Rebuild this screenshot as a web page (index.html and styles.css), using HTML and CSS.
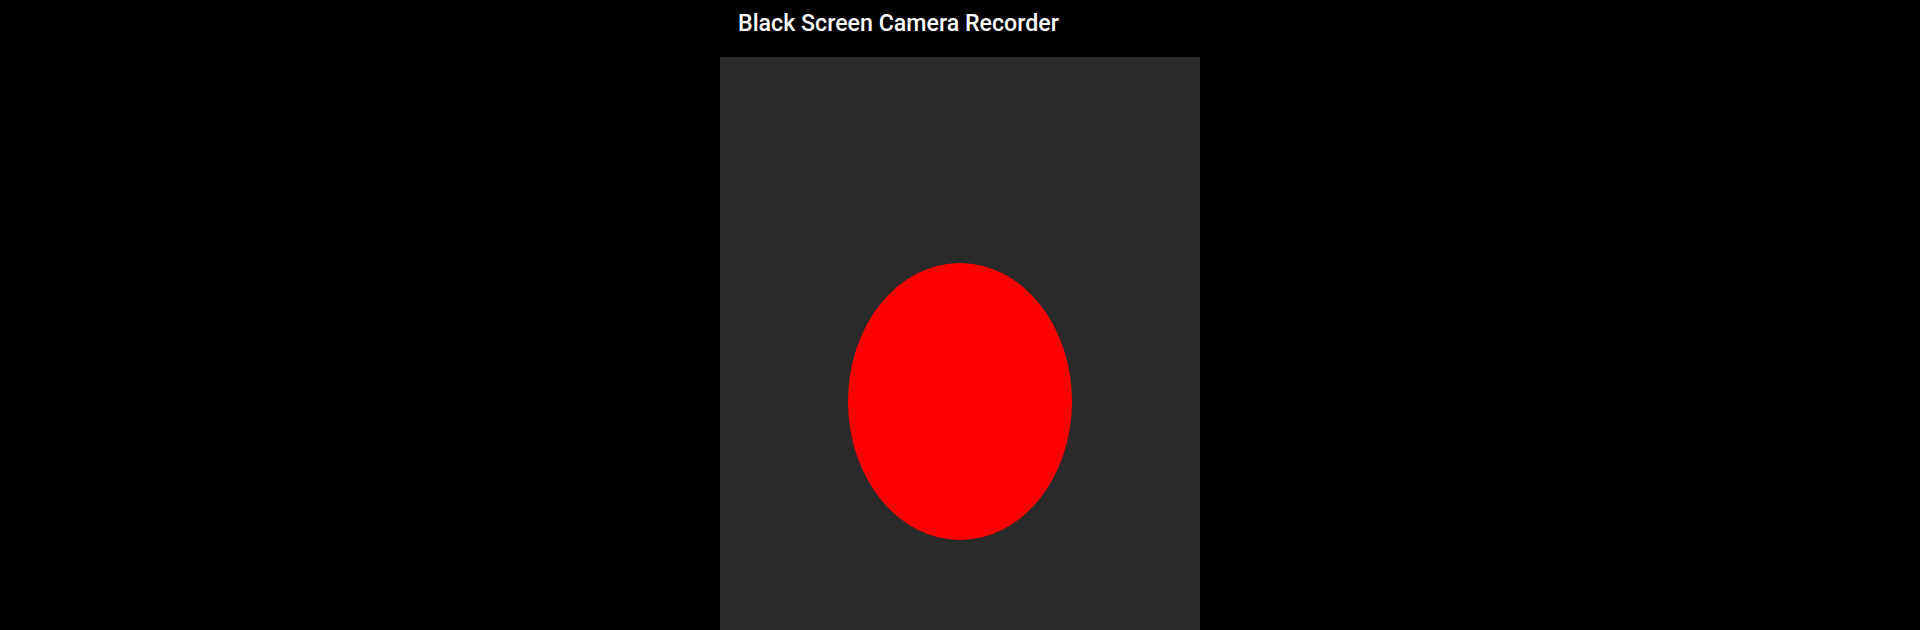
FILE: index.html
```html
<!DOCTYPE html>
<html>
<head>
<meta charset="utf-8">
<link rel="stylesheet" href="styles.css">
</head>
<body>
<div class="app">
  <header class="toolbar"><h1 class="title">Black Screen Camera Recorder</h1></header>
  <main class="panel">
    <div class="record"></div>
  </main>
</div>
</body>
</html>
```
FILE: styles.css
```css
html, body {
  margin: 0;
  padding: 0;
  background: #000;
  height: 100%;
  overflow: hidden;
}
.app {
  width: 480px;
  height: 100vh;
  margin: 0 auto;
  display: flex;
  flex-direction: column;
}
.toolbar {
  height: 57px;
  flex: none;
  padding-left: 18px;
  display: flex;
  align-items: flex-start;
}
.title {
  margin: 9px 0 0 0;
  font-family: Roboto, "Noto Sans", sans-serif;
  font-weight: 500;
  font-size: 23.2px;
  line-height: 28px;
  color: #fff;
}
.panel {
  background: #2a2a2a;
  flex: 1;
  display: flex;
  justify-content: center;
}
.record {
  margin-top: 206px;
  width: 224px;
  height: 277px;
  border-radius: 50%;
  background: #ff0000;
}
```
